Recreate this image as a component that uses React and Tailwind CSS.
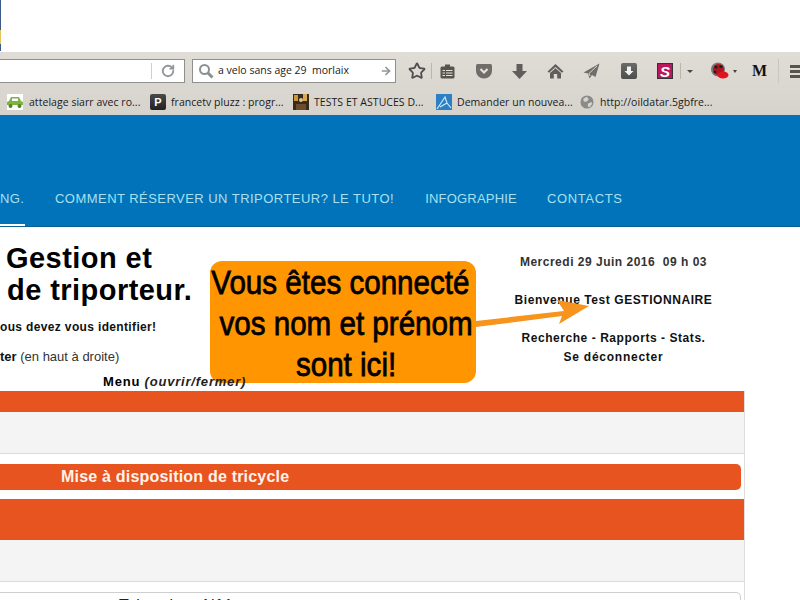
import { Star, RotateCw, ArrowRight } from 'lucide-react'

const sans = "font-['Liberation_Sans',Arial,sans-serif]"

function Bookmark({ icon, label, width, gap = 6 }) {
  return (
    <div className="flex items-center shrink-0" style={{ width, gap }}>
      {icon}
      <span className="font-['Open_Sans',sans-serif] text-[10.5px] leading-none text-[#1a1a1a] whitespace-nowrap pt-[1px] tracking-[0.04px]">{label}</span>
    </div>
  )
}

function Toolbar() {
  return (
    <div className="h-[63px] bg-gradient-to-b from-[#e0ddd7] to-[#d6d3cd] pt-[7px]">
      <div className="h-[24px] flex items-center">
        <div className="w-[185px] h-[24px] bg-white border border-l-0 border-[#8f8f8c] flex items-center justify-end shrink-0">
          <div className="w-px h-[16px] bg-[#cfcfcf] mr-[9px]" />
          <RotateCw size={14} strokeWidth={3.2} className="text-[#8f9598] mr-[9px]" />
        </div>
        <div className="ml-[7px] w-[204px] h-[24px] bg-white border border-[#8f8f8c] flex items-center shrink-0">
          <svg className="ml-[5px]" width="16" height="16" viewBox="0 0 16 16" fill="none">
            <circle cx="6.500" cy="6.500" r="4.500" stroke="#8a9094" strokeWidth="2" />
            <path d="M10 10l4.500 4.500" stroke="#8a9094" strokeWidth="3" />
          </svg>
          <span className="ml-[4px] font-['Open_Sans',sans-serif] text-[10.5px] text-[#1a1a1a] whitespace-pre">a velo sans age 29  morlaix</span>
          <ArrowRight size={12} strokeWidth={3.4} className="text-[#8f9598] ml-auto mr-[3px]" />
        </div>
        <div className="flex items-center ml-[12px] h-[24px]">
          <Star size={18} strokeWidth={2.4} className="text-[#4e4e4c]" />
          <div className="w-px h-[16px] bg-[#b9b6b0] ml-[5px]" />
          <svg className="ml-[8px]" width="15" height="15" viewBox="0 0 15 15">
            <rect x="0.500" y="2.500" width="14" height="12" rx="1.500" fill="#55544f" />
            <rect x="5" y="0.500" width="5" height="3" fill="#55544f" />
            <path d="M2.500 6.500h10M2.500 9h10M2.500 11.500h10" stroke="#e4e1db" />
            <path d="M5.500 5.500v7" stroke="#55544f" />
          </svg>
          <svg className="ml-[20px]" width="18" height="16" viewBox="0 0 18 16">
            <path d="M1 2.500Q1 1 2.500 1h13Q17 1 17 2.500V8a8 7.500 0 0 1-16 0Z" fill="#6e6d69" />
            <path d="M5.500 6l3.500 3.500L12.500 6" fill="none" stroke="#e4e1db" strokeWidth="2.200" />
          </svg>
          <svg className="ml-[18px]" width="17" height="17" viewBox="0 0 17 17">
            <path d="M5.500 1h6v7h4.500l-7.500 8L1 8h4.500Z" fill="#5f5e5a" />
          </svg>
          <svg className="ml-[19px]" width="17" height="16" viewBox="0 0 17 16">
            <path d="M8.500 1L0.500 8.500 2 9.800 8.500 4 15 9.800 16.500 8.500Z" fill="#5f5e5a" />
            <path d="M3 10L8.500 5.200 14 10V15.500H10.200V11H6.800V15.500H3Z" fill="#5f5e5a" />
          </svg>
          <svg className="ml-[19px]" width="17" height="16" viewBox="0 0 17 16">
            <path d="M16.500 0.500L0.500 9.500 5 10.500 6.500 15.500 9 12 12.500 14Z" fill="#6e6d69" />
            <path d="M14 3L6 10.500 7 13" fill="none" stroke="#d9d6d0" />
          </svg>
          <div className="ml-[21px] w-[16px] h-[16px] rounded-[2px] bg-gradient-to-b from-[#6a6a68] to-[#4e4e4c] flex items-center justify-center">
            <svg width="10" height="10" viewBox="0 0 10 10">
              <path d="M3 0.500h4v4.500h2.500L5 9.500 0.500 5H3Z" fill="#f1f1f1" />
            </svg>
          </div>
          <div className="ml-[20px] w-[16px] h-[16px] border border-[#333] bg-[#b8185c] flex items-center justify-center text-white font-bold italic text-[15px] leading-none font-['Liberation_Sans',sans-serif]">S</div>
          <div className="w-px h-[16px] bg-[#b9b6b0] ml-[7px]" />
          <div className="ml-[6px] w-0 h-0 border-x-[3px] border-x-transparent border-t-[3px] border-t-[#444]" />
          <svg className="ml-[17px]" width="19" height="18" viewBox="0 0 19 18">
            <circle cx="8" cy="7.500" r="7" fill="#77757a" />
            <circle cx="8.500" cy="7.500" r="5.500" fill="#b01620" />
            <ellipse cx="13" cy="13" rx="5.500" ry="3.500" fill="#e0141b" />
            <circle cx="6" cy="5" r="1.600" fill="#1c1c1c" />
            <circle cx="11" cy="4.500" r="1.600" fill="#1c1c1c" />
            <circle cx="5" cy="10" r="1.300" fill="#1c1c1c" />
          </svg>
          <div className="ml-[4px] w-0 h-0 border-x-[2px] border-x-transparent border-t-[3px] border-t-[#444]" />
          <span className="ml-[15px] font-['Liberation_Serif',serif] font-bold text-[16px] leading-none text-[#111]">M</span>
          <div className="w-px h-[24px] bg-[#c9c6c0] ml-[11px]" />
          <div className="ml-[11px] w-[14px] shrink-0 flex flex-col gap-[2px]">
            <div className="h-[3px] bg-[#55544f]" />
            <div className="h-[3px] bg-[#55544f]" />
            <div className="h-[3px] bg-[#55544f]" />
          </div>
        </div>
      </div>
      <div className="mt-[9px] h-[20px] flex items-center pl-[7px] overflow-hidden">
        <Bookmark
          width={143}
          label="attelage siarr avec ro..."
          icon={
            <svg className="bg-white" width="16" height="16" viewBox="0 0 16 16">
              <path d="M0 11V8l2-1 2-4h8l2 4 2 1v3Z" fill="#7cb342" />
              <rect x="5" y="4.500" width="6" height="2.500" fill="#fff" />
              <circle cx="3.500" cy="12" r="2" fill="#55822b" />
              <circle cx="12.500" cy="12" r="2" fill="#55822b" />
            </svg>
          }
        />
        <Bookmark
          width={143}
          gap={5}
          label="francetv pluzz : progr..."
          icon={<div className="w-[16px] h-[16px] rounded-[2px] bg-gradient-to-b from-[#4a4a4a] to-[#222] text-white text-[11px] font-bold leading-none flex items-center justify-center font-['Liberation_Sans',sans-serif]">P</div>}
        />
        <Bookmark
          width={143}
          gap={5}
          label="TESTS ET ASTUCES D..."
          icon={
            <svg width="16" height="16" viewBox="0 0 16 16">
              <rect width="16" height="16" fill="#3a2a1a" />
              <rect x="1" y="1" width="4" height="6" fill="#c9973d" />
              <rect x="10" y="0" width="4" height="7" fill="#d8a94f" />
              <circle cx="8" cy="6" r="2" fill="#e6c28a" />
              <rect x="3" y="10" width="10" height="6" fill="#6d4c2a" />
            </svg>
          }
        />
        <Bookmark
          width={144}
          gap={5}
          label="Demander un nouvea..."
          icon={
            <svg width="16" height="16" viewBox="0 0 16 16">
              <rect width="16" height="16" fill="#2d7fc4" />
              <path d="M1 15L9 3l2 6 4 5M4 13l7-4" fill="none" stroke="#cfeaf8" strokeWidth="1.200" />
            </svg>
          }
        />
        <Bookmark
          width={150}
          label="http://oildatar.5gbfre..."
          icon={
            <svg width="14" height="14" viewBox="0 0 16 16">
              <circle cx="8" cy="8" r="7.500" fill="#8a8a88" />
              <path d="M4 4l4-2 2 3-3 3-3-1ZM9 10l4-2 1 2-3 4-2-1Z" fill="#d5d3cf" />
            </svg>
          }
        />
      </div>
    </div>
  )
}

export default function App() {
  return (
    <div className={`relative w-[800px] h-[600px] overflow-hidden bg-white ${sans}`}>
      <div className="h-[52px] bg-white">
        <div className="w-px h-[30px] bg-[#3b5b8c]" />
        <div className="w-px h-[14px] bg-[#e5c35c]" />
        <div className="w-px h-[7px] bg-[#3b5b8c]" />
      </div>
      <Toolbar />

      <div className="h-[112px] bg-[#0073ba] pt-[76px] border-b border-[#0a5f93]">
        <div className="flex items-center h-[16px] text-[13px] text-[#a9e0f0] whitespace-nowrap">
          <span className="w-[24px] tracking-[0.4px]">NG.</span>
          <span className="ml-[31px] tracking-[0.46px]">COMMENT RÉSERVER UN TRIPORTEUR? LE TUTO!</span>
          <span className="ml-[31px] tracking-[0.2px]">INFOGRAPHIE</span>
          <span className="ml-[30px] tracking-[0.65px]">CONTACTS</span>
        </div>
        <div className="mt-[17px] w-[25px] h-[2px] bg-white" />
      </div>

      <div className="flex h-[164px]">
        <div className="w-[455px] shrink-0">
          <div className="pt-[15px] pl-[6px] text-[29px] leading-[32px] font-bold text-black tracking-[0.45px]">
            <div>Gestion et</div>
            <div className="pl-px">de triporteur.</div>
          </div>
          <div className="mt-[14px] text-[12px] leading-[14px] font-bold text-[#111] tracking-[0.35px]">ous devez vous identifier!</div>
          <div className="mt-[16px] text-[13px] leading-[14px] text-[#333]"><b className="text-[#111]">ter</b> (en haut à droite)</div>
          <div className="relative z-10 mt-[10px] pl-[103px] text-[13px] leading-[15px] font-bold text-black tracking-[0.8px]">
            Menu <i className="text-[#222]">(ouvrir/fermer)</i>
          </div>
        </div>
        <div className="w-[317px] shrink-0 text-center text-[12px] font-bold leading-[14px] text-[#111] tracking-[0.55px] pt-[28px]">
          <div className="text-[#333] tracking-[0.5px]">Mercredi 29 Juin 2016&nbsp; 09 h 03</div>
          <div className="mt-[24px] tracking-[0.57px]">Bienvenue Test GESTIONNAIRE</div>
          <div className="mt-[24px]">Recherche - Rapports - Stats.</div>
          <div className="mt-[5px] tracking-[0.75px]">Se déconnecter</div>
        </div>
      </div>

      <div className="w-[745px] border-r border-[#dcdcdc]">
        <div className="h-[21px] bg-[#e85420]" />
        <div className="h-[42px] bg-[#f4f4f4] border-b border-[#dcdcdc]" />
        <div className="h-[45px] pt-[10px] pr-[3px]">
          <div className="h-[26px] rounded-r-[5px] bg-[#e85420] text-[#fff3ea] text-[16px] leading-[26px] font-bold tracking-[0.2px] pl-[61px]">
            Mise à disposition de tricycle
          </div>
        </div>
        <div className="h-[41px] bg-[#e85420]" />
        <div className="h-[42px] bg-[#f4f4f4] border-b border-[#dcdcdc]" />
        <div className="pt-[10px] pr-[3px]">
          <div className="h-[40px] rounded-tr-[5px] border-t border-r border-[#cfcfcf] pl-[119px] pt-[1px] text-[16px] leading-[24px] text-[#222] tracking-[1.4px]">
            Tricycle - N°1
          </div>
        </div>
      </div>

      {/* annotation drawn over the page */}
      <div className="absolute left-[210px] top-[261px] w-[266px] h-[122px] rounded-[12px] bg-[#ff9500] text-black">
        <div className="flex flex-col items-center scale-x-[0.87] text-[34px] leading-[41px] whitespace-nowrap [-webkit-text-stroke:0.8px_black]">
          <div className="pt-[1px] pr-[6px]">Vous êtes connecté</div>
          <div className="pl-[7px]">vos nom et prénom</div>
          <div className="pl-[7px]">sont ici!</div>
        </div>
      </div>
      <svg className="absolute left-[474px] top-[298px]" width="120" height="32" viewBox="0 0 120 32">
        <path d="M2 23L90 13 83 2 115 8 85 26 88 18 2 29Z" fill="#f7941d" />
      </svg>
    </div>
  )
}
